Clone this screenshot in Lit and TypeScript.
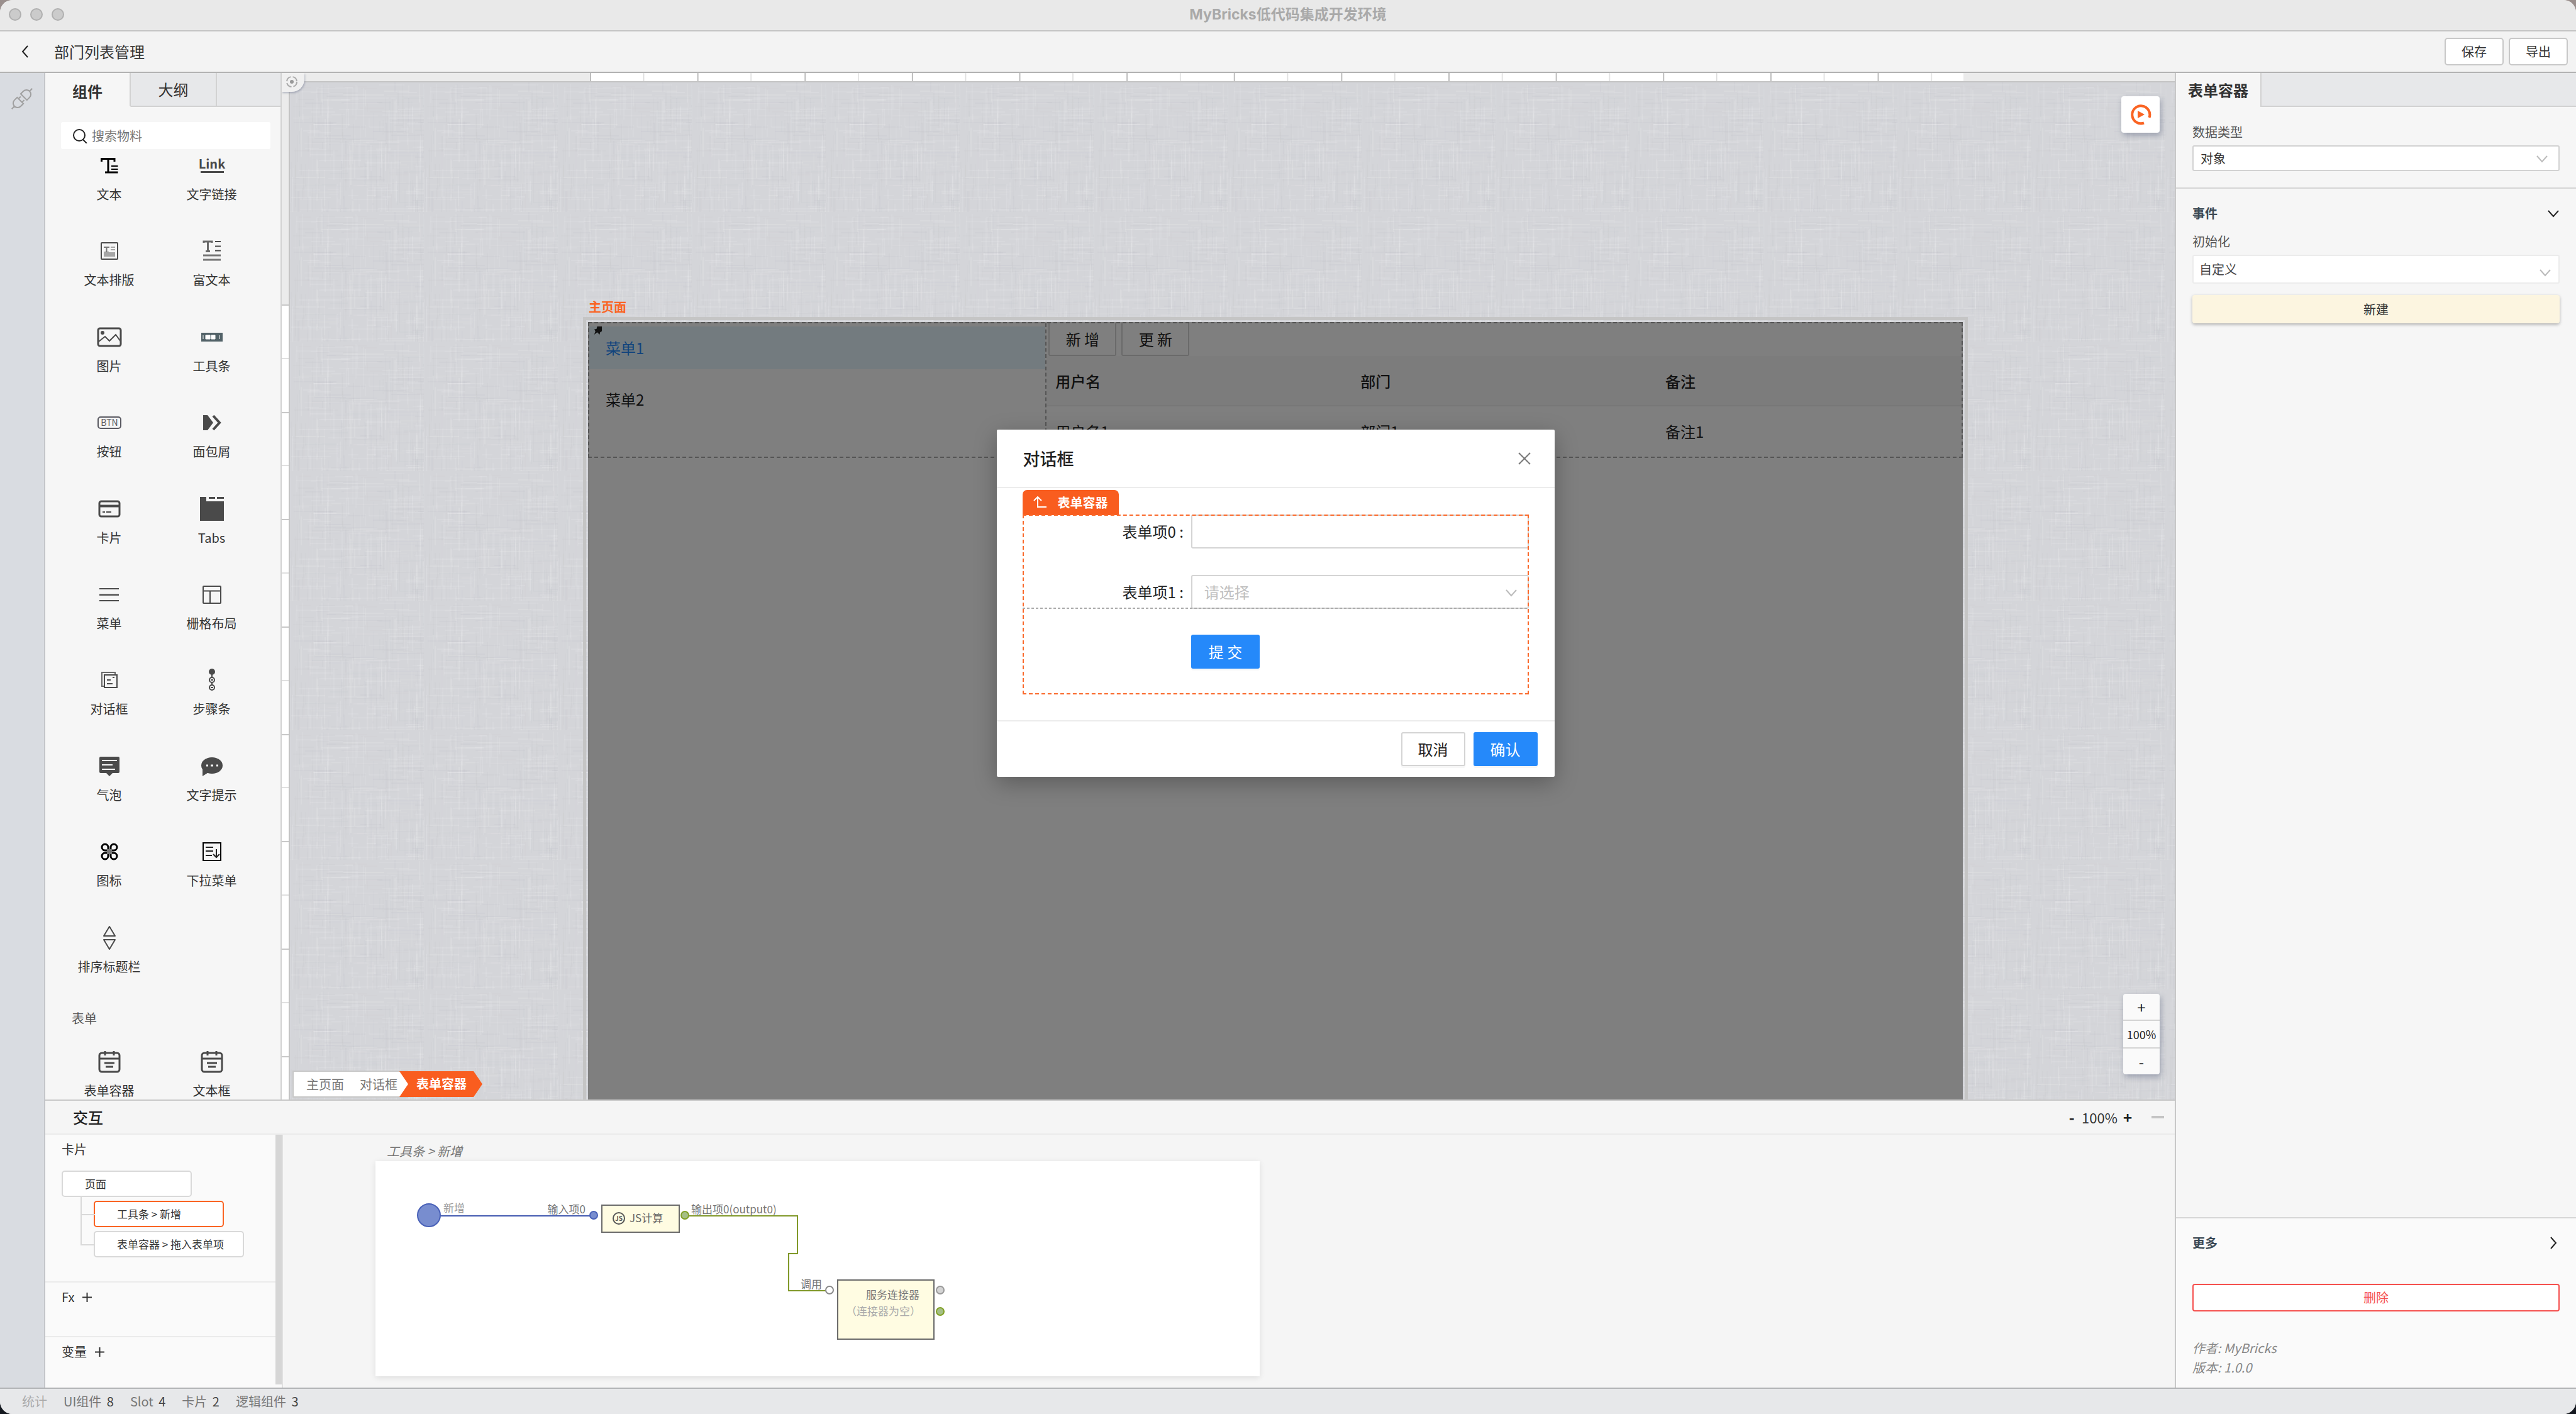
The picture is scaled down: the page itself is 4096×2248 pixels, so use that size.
import { LitElement, html, css, svg, type SVGTemplateResult } from "lit";
import { customElement } from "lit/decorators.js";
import { classMap } from "lit/directives/class-map.js";

const FONT = css`"Noto Sans CJK SC", "Noto Sans", sans-serif`;

/* ---- component glyphs, each drawn in a 48 x 40 box around (24, 20) ---- */
const G = "#4a4a4a";
const formGlyph = svg`
  <rect x="8" y="6" width="32" height="30" rx="4" fill="none" stroke=${G} stroke-width="3"/>
  <path d="M8 15H40M17 3v7M31 3v7M16 22H32M18 28H30" stroke=${G} stroke-width="3" fill="none"/>`;

const glyphs: Record<string, SVGTemplateResult> = {
  text: svg`
    <path d="M11.5 14V9.5H32V14M22 9V31M17 31H37.5" stroke="#000" stroke-width="3" fill="none"/>
    <path d="M27 21H37.5M27 26H37.5" stroke="#000" stroke-width="2" fill="none"/>`,
  link: svg`
    <text x="24" y="25" text-anchor="middle" font-size="20" font-weight="600" fill=${G}>Link</text>
    <rect x="6" y="29" width="37" height="3" fill=${G}/>`,
  layout: svg`
    <rect x="11" y="7" width="26" height="26" rx="1" fill="none" stroke=${G} stroke-width="2"/>
    <path d="M15 14H24M19.5 13V22M16 22H23" stroke="#777" stroke-width="2" fill="none"/>
    <path d="M26 14H33M26 18H33M16 23H32V28H16Z" stroke="#a6a6a6" stroke-width="2" fill="#a6a6a6"/>`,
  rich: svg`
    <path d="M11 7V5H24V7M17.5 5V20M14 20.5H21" stroke="#6a6a6a" stroke-width="3" fill="none"/>
    <path d="M29 5H38M29 12.5H38M29 19.5H38" stroke=${G} stroke-width="2" fill="none"/>
    <path d="M10 27H38M10 34H38" stroke="#777" stroke-width="3" fill="none"/>`,
  image: svg`
    <rect x="6" y="6" width="36" height="28" rx="3" fill="none" stroke=${G} stroke-width="3"/>
    <circle cx="13" cy="13" r="3" fill=${G}/>
    <path d="M7 27L17 19L24 26L34 16L42 27" fill="none" stroke=${G} stroke-width="2"/>`,
  toolbar: svg`
    <rect x="7" y="13" width="34" height="14" fill="#526268"/>
    <path d="M10 17V23M14 17H21V23H14ZM23 17H29V23H23ZM36 17V23" stroke="#fff" stroke-width="1" fill="#fff"/>`,
  btn: svg`
    <rect x="6" y="11" width="36" height="18" rx="4" fill="none" stroke="#5a5a62" stroke-width="2"/>
    <text x="24" y="25" text-anchor="middle" font-size="14" fill="#5a5a62">BTN</text>`,
  crumb: svg`
    <path d="M10 8H17L26 20L17 32H10Z" fill=${G}/>
    <path d="M26 9L36 20L26 31" fill="none" stroke=${G} stroke-width="4"/>`,
  card: svg`
    <rect x="8" y="8" width="32" height="24" rx="3" fill="none" stroke=${G} stroke-width="3"/>
    <path d="M8 15.5H40" stroke=${G} stroke-width="4"/>
    <path d="M13 25H17M19 25H27" stroke=${G} stroke-width="2"/>`,
  tabs: svg`
    <path d="M5 1H15V8H43V39H5Z" fill=${G}/>
    <path d="M19 2.5H29M32 2.5H43" stroke=${G} stroke-width="3"/>`,
  menu: svg`
    <path d="M8 11H39M8 30H39" stroke=${G} stroke-width="2"/>
    <path d="M8 20.5H39" stroke="#666" stroke-width="3"/>`,
  grid: svg`
    <rect x="10" y="7" width="28" height="27" rx="1" fill="none" stroke=${G} stroke-width="2"/>
    <path d="M10 14.5H38M21 15V34" stroke=${G} stroke-width="2"/>`,
  dialog: svg`
    <path d="M16 30H12V8H33V12" fill="none" stroke="#6a6a6a" stroke-width="2"/>
    <path d="M16 12H36V32H16Z" fill="none" stroke=${G} stroke-width="2"/>
    <path d="M20 20H26M29 16H32M20 26H29" stroke=${G} stroke-width="2"/>`,
  steps: svg`
    <circle cx="24" cy="7" r="5" fill=${G}/>
    <circle cx="24" cy="20" r="4" fill="none" stroke=${G} stroke-width="2"/>
    <circle cx="24" cy="32" r="4" fill="none" stroke=${G} stroke-width="2"/>
    <path d="M24 10V16M24 24V28M22 20H26M22 32H26" stroke=${G} stroke-width="2"/>`,
  bubble: svg`
    <path d="M10 5H38A2 2 0 0 1 40 7V29A2 2 0 0 1 38 31H29L24 36L19 31H10A2 2 0 0 1 8 29V7A2 2 0 0 1 10 5Z" fill=${G}/>
    <path d="M12 11H36M12 18H29M12 25H33" stroke="#f6f6f6" stroke-width="2"/>`,
  tip: svg`
    <ellipse cx="24" cy="19" rx="17" ry="13" fill=${G}/>
    <path d="M9 24V36L20 29Z" fill=${G}/>
    <path d="M15 19h3M22 19h4M31 19h3" stroke="#f6f6f6" stroke-width="3"/>`,
  icon: svg`
    <g fill="none" stroke="#000" stroke-width="3">
      <path d="M22 18H17A5 5 0 1 1 22 13ZM26 18H31A5 5 0 1 0 26 13ZM22 22H17A5 5 0 1 0 22 27ZM26 22H31A5 5 0 1 1 26 27Z"/>
    </g><rect x="20" y="16" width="8" height="8" fill="#777"/>`,
  dropdown: svg`
    <rect x="10" y="6" width="28" height="28" fill="none" stroke="#000" stroke-width="2"/>
    <path d="M14 13H26M14 19H26M14 26H24M31 16V28M26 24L31 29L36 24" fill="none" stroke="#222" stroke-width="2"/>`,
  sort: svg`
    <path d="M24 2L33 17H15ZM24 38L33 23H15Z" fill="none" stroke=${G} stroke-width="2" stroke-linejoin="round"/>`,
  form: formGlyph,
};

const basics: [string, string][] = [
  ["text", "文本"], ["link", "文字链接"],
  ["layout", "文本排版"], ["rich", "富文本"],
  ["image", "图片"], ["toolbar", "工具条"],
  ["btn", "按钮"], ["crumb", "面包屑"],
  ["card", "卡片"], ["tabs", "Tabs"],
  ["menu", "菜单"], ["grid", "栅格布局"],
  ["dialog", "对话框"], ["steps", "步骤条"],
  ["bubble", "气泡"], ["tip", "文字提示"],
  ["icon", "图标"], ["dropdown", "下拉菜单"],
  ["sort", "排序标题栏"],
];
const forms: [string, string][] = [["form", "表单容器"], ["form", "文本框"]];

const chevron = (cls: string, dir: "down" | "right" | "left") => {
  const d = { down: "M2 6L10 15L18 6", right: "M6 1L14 10L6 19", left: "M14 1L6 10L14 19" }[dir];
  return html`<svg class=${cls} viewBox="0 0 20 20" aria-hidden="true"><path d=${d} fill="none" stroke="currentColor" stroke-width="2"/></svg>`;
};

/* ---------------- component library ---------------- */
@customElement("component-library")
class ComponentLibrary extends LitElement {
  static styles = css`
    :host { display: flex; flex-direction: column; width: 376px; flex: none; border-right: 2px solid #d2d2d2; background: #f6f6f6; font-family: ${FONT}; color: #333; min-height: 0; overflow: hidden; }
    .tabs { display: flex; height: 54px; flex: none; background: #e7e8ea; }
    .tab { width: 137px; border: 0; border-right: 2px solid #d2d2d2; border-bottom: 2px solid #d2d2d2; background: none; font: 24px/50px ${FONT}; color: #333; padding: 0; }
    .tab.on { background: #f6f6f6; border-bottom-color: #f6f6f6; font-weight: 700; padding-top: 4px; width: 136px; }
    .fill { flex: 1; border-bottom: 2px solid #d2d2d2; }
    .search { display: flex; align-items: center; gap: 7px; margin: 24px 16px 0 25px; height: 43px; padding: 0 18px; background: #fff; border-radius: 3px; flex: none; }
    .search svg { width: 24px; height: 24px; flex: none; }
    .search input { flex: 1; min-width: 0; border: 0; outline: 0; padding: 0; background: none; font: 20px/28px ${FONT}; color: #333; }
    .search input::placeholder { color: #757575; opacity: 1; }
    .grid { display: grid; grid-template-columns: 1fr 1fr; grid-auto-rows: 1fr; padding: 0 28px 0 20px; flex: 1; }
    .grid.last { flex: none; }
    .item { display: flex; flex-direction: column; align-items: center; gap: 12px; padding-top: 6px; font-size: 20px; line-height: 28px; white-space: nowrap; }
    .item svg { width: 48px; height: 40px; font-family: ${FONT}; }
    h3 { margin: 0 0 25px; padding-left: 42px; font-size: 20px; font-weight: 400; line-height: 36px; color: #555; }
  `;
  item = ([icon, label]: [string, string]) => html`
    <div class="item"><svg viewBox="0 0 48 40" aria-hidden="true">${glyphs[icon]}</svg><span>${label}</span></div>`;
  render() {
    return html`
      <div class="tabs"><button class="tab on">组件</button><button class="tab">大纲</button><div class="fill"></div></div>
      <label class="search">
        <svg viewBox="0 0 24 24" aria-hidden="true"><circle cx="11" cy="11" r="9" fill="none" stroke="#222" stroke-width="2"/><path d="M17 18L23 24" stroke="#222" stroke-width="2"/></svg>
        <input type="text" placeholder="搜索物料" aria-label="搜索物料" />
      </label>
      <div class="grid">${basics.map(this.item)}</div>
      <h3>表单</h3>
      <div class="grid last">${forms.map(this.item)}</div>`;
  }
}

/* ---------------- linen backdrop ---------------- */
function weave(): SVGTemplateResult[] {
  let seed = 77;
  const rnd = () => ((seed = (seed * 16807) % 2147483647) / 2147483647);
  const out: SVGTemplateResult[] = [];
  for (let i = 0; i < 420; i++) {
    const vertical = rnd() < 0.55;
    const len = 14 + Math.floor(rnd() * 56);
    const x = Math.floor(rnd() * 213);
    const y = Math.floor(rnd() * 206);
    const tone = rnd() < 0.5 ? "#ffffff" : "#b4b6bc";
    const o = (0.03 + rnd() * 0.08).toFixed(2);
    const w = vertical ? 2 : len;
    const h = vertical ? len : 2;
    out.push(svg`<rect x=${x} y=${y} width=${w} height=${h} fill=${tone} opacity=${o}/>`);
  }
  return out;
}

/* ---------------- dialog shown on the page ---------------- */
@customElement("page-dialog")
class PageDialog extends LitElement {
  static styles = css`
    :host { display: flex; flex-direction: column; width: 887px; background: #fff; border-radius: 2px; box-shadow: 0 10px 36px rgba(0, 0, 0, 0.28); font-family: ${FONT}; color: #222; font-size: 24px; }
    * { box-sizing: border-box; }
    header { display: flex; align-items: center; justify-content: space-between; height: 93px; padding: 0 37px 0 42px; border-bottom: 2px solid #ececec; }
    h2 { margin: 0; font-size: 27px; line-height: 36px; font-weight: 500; }
    .close { width: 22px; height: 22px; padding: 0; border: 0; background: none; color: #777; display: flex; }
    .close svg { width: 22px; height: 22px; }
    .body { padding: 42px 41px 41px; }
    .form { position: relative; display: grid; grid-template-columns: 1fr 2fr; height: 286px; align-content: start; }
    .form::after { content: ""; position: absolute; inset: 0; border: 2px dashed #fa6a2c; pointer-events: none; }
    .tag { position: absolute; left: 0; top: -39px; height: 40px; display: flex; align-items: center; gap: 17px; padding: 0 17px; background: #f95d1f; color: #fff; border-radius: 7px 7px 0 0; font-size: 20px; line-height: 28px; font-weight: 600; }
    .tag svg { width: 22px; height: 20px; }
    .lab { text-align: right; padding-right: 12px; line-height: 54px; }
    .box { height: 54px; width: 100%; border: 2px solid #d4d4d4; border-radius: 3px; background: #fff; font: 24px/36px ${FONT}; padding: 0 19px; outline: 0; }
    .pick { position: relative; display: flex; margin-top: 42px; }
    .pick select { appearance: none; color: #bfbfbf; }
    .pick svg { position: absolute; right: 18px; top: 18px; width: 20px; height: 20px; color: #bbb; }
    .second { margin-top: 42px; }
    .slot { grid-column: 1 / -1; height: 2px; margin-top: -2px; background: repeating-linear-gradient(90deg, #aaa 0 4px, transparent 4px 7px); z-index: 1; }
    button.b { height: 54px; border: 2px solid #d4d4d4; border-radius: 3px; background: #fff; color: #222; font: 24px/36px ${FONT}; padding: 0 25px; box-shadow: 0 3px 0 rgba(0, 0, 0, 0.03); }
    button.primary { background: #2589fa; border-color: #2589fa; color: #fff; }
    button.submit { grid-column: 2; justify-self: start; margin-top: 41px; padding: 0 26px; }
    footer { display: flex; justify-content: flex-end; gap: 13px; padding: 17px 27px; border-top: 2px solid #ececec; }
  `;
  render() {
    return html`
      <header><h2>对话框</h2>
        <button class="close" aria-label="关闭"><svg viewBox="0 0 22 22"><path d="M2 2L20 20M20 2L2 20" stroke="currentColor" stroke-width="2"/></svg></button>
      </header>
      <div class="body"><div class="form">
        <div class="tag"><svg viewBox="0 0 22 20"><path d="M1 7L7 1L13 7M7 2V17H21" fill="none" stroke="#fff" stroke-width="2"/></svg>表单容器</div>
        <label class="lab" for="f0">表单项0 :</label>
        <input class="box" id="f0" type="text" />
        <label class="lab second" for="f1">表单项1 :</label>
        <div class="pick"><select class="box" id="f1"><option>请选择</option></select>${chevron("arrow", "down")}</div>
        <div class="slot"></div>
        <button class="b primary submit">提 交</button>
      </div></div>
      <footer><button class="b">取消</button><button class="b primary">确认</button></footer>`;
  }
}

/* ---------------- design canvas ---------------- */
@customElement("design-canvas")
class DesignCanvas extends LitElement {
  static styles = css`
    :host { position: relative; display: grid; grid-template: 15px 1fr / 13px 1fr; flex: 1; min-width: 0; min-height: 0; overflow: hidden; font-family: ${FONT}; color: #222; background: #d4d5d9; }
    * { box-sizing: border-box; }
    .ruler { background: #ebebeb; }
    .top { grid-column: 1 / -1; padding: 0 336px 0 490px; border-bottom: 2px solid #c4c4c4; }
    .top div { height: 100%; background-color: #fff; background-image: linear-gradient(90deg, #bdbdbd 0 2px, transparent 2px 50%, #d8d8d8 50%, transparent 51%); background-size: 7.8125% 100%; }
    .left { padding-top: 353px; border-right: 2px solid #c4c4c4; }
    .left svg { display: block; width: 100%; height: 100%; background: #fff; }
    .corner { position: absolute; left: 0; top: 0; width: 36px; height: 30px; background: #f0f0f0; border-radius: 0 0 20px 0; box-shadow: 1px 2px 3px rgba(80, 90, 120, 0.35); }
    .corner svg { position: absolute; left: 5px; top: 3px; width: 22px; height: 22px; }
    .field { position: relative; display: flex; flex-direction: column; min-height: 0; overflow: hidden; padding: 343px 329px 0 466px; }
    .linen { position: absolute; inset: 0; width: 100%; height: 100%; }
    .name { position: relative; font-size: 20px; line-height: 28px; margin: 0 0 2px 9px; color: #fa6423; font-weight: 600; }
    .frame { position: relative; flex: 1; min-height: 0; border: 5px solid #c5c5c5; border-bottom: 0; padding: 3px 3px 0; }
    .page { position: relative; height: 100%; background: #fff; font-size: 24px; }
    .cols { display: grid; grid-template-columns: 1fr 2fr; height: 216px; border: 2px dashed #aaa; }
    .nav { padding-top: 5px; display: flex; flex-direction: column; gap: 14px; border-right: 2px dashed #aaa; position: relative; }
    .nav a { color: #222; text-decoration: none; line-height: 68px; padding-left: 26px; }
    .nav a.on { background: #e6f7ff; color: #2589fa; }
    .pin { position: absolute; left: 6px; top: 4px; width: 15px; height: 15px; }
    .tools { display: flex; gap: 8px; padding-left: 3px; height: 52px; background: #fff; }
    .tools button { width: 108px; border: 2px solid #d4d4d4; border-top: 0; border-radius: 0 0 3px 3px; background: #fff; color: #222; font: 24px/36px ${FONT}; padding: 0; }
    table { width: 100%; border-collapse: collapse; table-layout: fixed; }
    th, td { text-align: left; padding: 0 14px; height: 79px; font-weight: 400; }
    th { background: #f8f8f8; font-weight: 500; border-bottom: 2px solid #eee; }
    .mask { position: absolute; inset: 0; background: rgba(0, 0, 0, 0.5); display: flex; justify-content: center; align-items: flex-start; padding-top: 171px; }
    .float { position: absolute; right: 24px; background: #fff; border-radius: 4px; box-shadow: 2px 4px 10px rgba(80, 90, 120, 0.45); border: 0; padding: 0; overflow: hidden; }
    .play { top: 37px; width: 61px; height: 58px; }
    .play svg { width: 34px; height: 34px; display: block; margin: auto; }
    .zoom { bottom: 40px; width: 58px; background: #fafafa; }
    .zoom button, .zoom span { display: block; width: 100%; height: 41px; border: 0; background: none; padding: 0; text-align: center; font: 24px/38px ${FONT}; color: #222; }
    .zoom span { height: 46px; font-size: 18px; line-height: 42px; border: solid #d4d4d4; border-width: 2px 0; }
    .crumbs { position: absolute; left: 17px; bottom: 3px; display: flex; height: 43px; font-size: 20px; line-height: 39px; }
    .crumbs div { display: flex; gap: 25px; padding: 0 17px 0 20px; background: #fff; border: 2px solid #c8c8c8; border-right: 0; }
    .crumbs a { color: #777; text-decoration: none; }
    .crumbs a.on { margin: 1px 0 1px -14px; padding: 0 25px 0 27px; background: #f95d1f; color: #fff; font-weight: 600; clip-path: polygon(0 0, calc(100% - 14px) 0, 100% 50%, calc(100% - 14px) 100%, 0 100%, 14px 50%); }
  `;
  render() {
    return html`
      <div class="ruler top"><div></div></div>
      <div class="ruler left">
        <svg aria-hidden="true"><defs><pattern id="tick" width="14" height="512" patternUnits="userSpaceOnUse">
          <path d="M0 1H14M0 172H14M0 342H14" stroke="#c8c8c8" stroke-width="2"/><path d="M0 86H14M0 256H14M0 427H14" stroke="#e0e0e0" stroke-width="2"/>
        </pattern></defs><rect width="100%" height="100%" fill="url(#tick)"/></svg>
      </div>
      <div class="field">
        <svg class="linen" aria-hidden="true"><defs><pattern id="w" width="213" height="206" patternUnits="userSpaceOnUse">${weave()}</pattern></defs>
          <rect width="100%" height="100%" fill="url(#w)"/></svg>
        <div class="name">主页面</div>
        <div class="frame"><div class="page">
          <div class="cols">
            <nav class="nav"><a class="on" href="#m1">菜单1</a><a href="#m2">菜单2</a>
              <svg class="pin" viewBox="0 0 16 16" aria-hidden="true"><path d="M7 1H15V9L12 11L11 15L7 11L2 15L4 9L2 6L6 5Z" fill="#222"/></svg>
            </nav>
            <div>
              <div class="tools"><button>新 增</button><button>更 新</button></div>
              <table>
                <thead><tr><th>用户名</th><th>部门</th><th>备注</th></tr></thead>
                <tbody><tr><td>用户名1</td><td>部门1</td><td>备注1</td></tr></tbody>
              </table>
            </div>
          </div>
          <div class="mask"><page-dialog></page-dialog></div>
        </div></div>
      </div>
      <div class="corner"><svg viewBox="0 0 22 22" aria-hidden="true"><circle cx="11" cy="11" r="8" fill="none" stroke="#aaa" stroke-width="2" stroke-dasharray="10 3"/><circle cx="11" cy="11" r="3" fill="#999"/></svg></div>
      <button class="float play" aria-label="预览"><svg viewBox="0 0 34 34"><path d="M22 30.500A14 14 0 1 1 30.500 22" fill="none" stroke="#fa6423" stroke-width="4"/><path d="M12 11L23 17L12 23Z" fill="#fa6423"/></svg></button>
      <div class="float zoom"><button>+</button><span>100%</span><button>-</button></div>
      <nav class="crumbs"><div><a href="#p">主页面</a><a href="#d">对话框</a></div><a class="on" href="#f">表单容器</a></nav>`;
  }
}

/* ---------------- interaction panel ---------------- */
@customElement("flow-panel")
class FlowPanel extends LitElement {
  static styles = css`
    :host { display: flex; flex-direction: column; height: 458px; box-sizing: border-box; flex: none; border-top: 2px solid #c8c8c8; background: #f5f5f5; font-family: ${FONT}; color: #333; font-size: 20px; }
    * { box-sizing: border-box; }
    header { display: flex; align-items: center; justify-content: space-between; height: 54px; flex: none; padding: 0 17px 0 44px; border-bottom: 2px solid #ebebeb; }
    h2 { margin: 0; font-size: 24px; line-height: 36px; font-weight: 500; color: #222; }
    .zoom { display: flex; align-items: center; gap: 8px; font-size: 22px; line-height: 32px; }
    .zoom button { border: 0; background: none; padding: 0; width: 16px; font: 700 24px/32px ${FONT}; color: #222; }
    .zoom .min { margin-left: 22px; width: 20px; height: 4px; background: #c4c4c4; }
    .main { flex: 1; display: flex; min-height: 0; }
    aside { width: 378px; flex: none; border-right: 2px solid #e0e0e0; display: flex; background: #fafafa; }
    .groups { flex: 1; display: flex; flex-direction: column; min-width: 0; }
    .bar { width: 10px; margin-bottom: 5px; background: #d6d6d6; }
    .group { flex: none; border-bottom: 2px solid #ebebeb; padding: 9px 0 0 26px; line-height: 28px; height: 87px; }
    .group.cards { height: 235px; }
    .group:last-child { border: 0; height: auto; }
    .add { border: 0; background: none; padding: 0; margin-left: 12px; width: 17px; height: 17px; vertical-align: -1px; }
    .add svg { display: block; width: 17px; height: 17px; }
    h3 { margin: 0; font: inherit; }
    ul { list-style: none; margin: 0; padding: 0; }
    .tree { margin-top: 20px; display: flex; flex-direction: column; align-items: flex-start; }
    .node { display: block; min-width: 207px; height: 42px; border: 2px solid #d9d9d9; border-radius: 5px; background: #fff; font: 17px/26px ${FONT}; color: #333; padding: 0 30px 0 35px; text-align: left; white-space: nowrap; }
    .node.on { border-color: #fa6423; }
    .kids { margin-left: 30px; }
    .kids li { padding: 6px 0 0 21px; position: relative; }
    .kids li::before { content: ""; position: absolute; left: 0; top: 0; width: 21px; height: 27px; border-left: 2px solid #d9d9d9; border-bottom: 2px solid #d9d9d9; }
    .kids li + li::before { top: -22px; height: 49px; }
    .stage { flex: 1; padding: 12px 0 0 147px; min-width: 0; }
    .cap { padding-left: 18px; font-style: italic; line-height: 28px; color: #757575; margin-bottom: 2px; }
    .sheet { display: block; width: 1406px; height: 342px; background: #fff; box-shadow: 0 2px 9px rgba(0, 0, 0, 0.1); font-family: ${FONT}; font-size: 17px; }
  `;
  plus = html`<svg viewBox="0 0 17 17" aria-hidden="true"><path d="M8.5 1V16M1 8.5H16" stroke="#333" stroke-width="2"/></svg>`;
  render() {
    const cards = [{ t: "工具条 > 新增", on: true }, { t: "表单容器 > 拖入表单项", on: false }];
    return html`
      <header><h2>交互</h2><div class="zoom"><button>-</button><span>100%</span><button>+</button><span class="min"></span></div></header>
      <div class="main">
        <aside>
          <div class="groups">
            <section class="group cards"><h3>卡片</h3>
              <div class="tree"><button class="node">页面</button>
                <ul class="kids">${cards.map((c) => html`<li><button class=${classMap({ node: true, on: c.on })}>${c.t}</button></li>`)}</ul>
              </div>
            </section>
            <section class="group">Fx<button class="add" aria-label="添加 Fx">${this.plus}</button></section>
            <section class="group">变量<button class="add" aria-label="添加变量">${this.plus}</button></section>
          </div>
          <div class="bar"></div>
        </aside>
        <div class="stage">
          <div class="cap">工具条 &gt; 新增</div>
          <svg class="sheet" viewBox="0 0 1406 342">
            <path d="M103 87H345" stroke="#435ab0" stroke-width="2"/>
            <circle cx="85" cy="86" r="18" fill="#788dcf" stroke="#4961b8" stroke-width="2"/>
            <circle cx="347" cy="86" r="6" fill="#788dcf" stroke="#4961b8" stroke-width="2"/>
            <path d="M499 87H671V147H657V206H716" fill="none" stroke="#81992a" stroke-width="2"/>
            <rect x="360" y="70" width="123" height="43" fill="#fffce2" stroke="#6b6b6b" stroke-width="2"/>
            <circle cx="387" cy="91" r="9" fill="none" stroke="#555" stroke-width="2"/>
            <text x="387" y="95" font-size="10" font-weight="700" text-anchor="middle" fill="#555">JS</text>
            <text x="404" y="97" fill="#666">JS计算</text>
            <circle cx="492" cy="86" r="6" fill="#a5bf86" stroke="#81a026" stroke-width="2"/>
            <text x="108" y="81" fill="#999">新增</text>
            <text x="334" y="83" fill="#777" text-anchor="end">输入项0</text>
            <text x="502" y="83" fill="#777">输出项0(output0)</text>
            <text x="676" y="202" fill="#777">调用</text>
            <rect x="735" y="189" width="153" height="94" fill="#fffce2" stroke="#6b6b6b" stroke-width="2"/>
            <text x="780" y="219" fill="#777">服务连接器</text>
            <text x="748" y="245" fill="#aaa">（连接器为空）</text>
            <circle cx="722" cy="205" r="6" fill="#fff" stroke="#8a8a8a" stroke-width="2"/>
            <circle cx="898" cy="205" r="6" fill="#d4d4d4" stroke="#999" stroke-width="2"/>
            <circle cx="898" cy="239" r="6" fill="#a5bf86" stroke="#81a026" stroke-width="2"/>
          </svg>
        </div>
      </div>`;
  }
}

/* ---------------- property panel ---------------- */
@customElement("property-panel")
class PropertyPanel extends LitElement {
  static styles = css`
    :host { display: flex; flex-direction: column; width: 638px; box-sizing: border-box; flex: none; border-left: 2px solid #c8c8c8; background: #f6f6f6; font-family: ${FONT}; font-size: 20px; line-height: 28px; color: #555; }
    * { box-sizing: border-box; }
    .tabs { display: flex; height: 54px; background: #e7e8ea; }
    .tab { border: 0; border-right: 2px solid #d2d2d2; background: #f6f6f6; padding: 0 19px; font: 600 24px/36px ${FONT}; color: #333; }
    .fill { flex: 1; border-bottom: 2px solid #d2d2d2; }
    .sec { display: flex; flex-direction: column; padding: 0 26px; }
    .first { padding-top: 26px; padding-bottom: 26px; border-bottom: 2px solid #d6d6d6; }
    .events { flex: 1; padding-top: 25px; }
    .head { display: flex; align-items: center; justify-content: space-between; font-weight: 600; color: #3d4a55; }
    .chev { width: 20px; height: 20px; color: #222; }
    .pick { position: relative; display: flex; margin-top: 7px; }
    select { appearance: none; width: 100%; height: 41px; border: 2px solid #d2d2d2; border-radius: 3px; background: #fff; padding: 0 11px; font: 20px/28px ${FONT}; color: #333; outline: 0; }
    .soft select { height: 46px; border-color: #ececec; color: #444; padding: 0 9px; }
    .arrow { position: absolute; right: 18px; top: 11px; width: 20px; height: 20px; color: #bbb; }
    .soft .arrow { right: 13px; top: 18px; }
    .init { margin-top: 17px; }
    .new { height: 45px; margin-top: 18px; border: 0; border-radius: 4px; background: #fcf5e0; box-shadow: 0 2px 5px rgba(0, 0, 0, 0.3); font: 20px/28px ${FONT}; color: #333; }
    .more { border-top: 2px solid #d6d6d6; background: #fafafa; padding-top: 25px; height: 271px; }
    .del { height: 44px; margin-top: 51px; border: 2px solid #f5504e; border-radius: 4px; background: #fff; font: 20px/28px ${FONT}; color: #f5504e; }
    .meta { margin-top: 42px; font-style: italic; line-height: 31px; color: #888; }
  `;
  render() {
    return html`
      <div class="tabs"><button class="tab">表单容器</button><div class="fill"></div></div>
      <div class="sec first"><label for="t">数据类型</label>
        <div class="pick"><select id="t"><option>对象</option></select>${chevron("arrow", "down")}</div></div>
      <div class="sec events"><div class="head">事件${chevron("chev", "down")}</div>
        <label class="init" for="i">初始化</label>
        <div class="pick soft"><select id="i"><option>自定义</option></select>${chevron("arrow", "down")}</div>
        <button class="new">新建</button></div>
      <div class="sec more"><div class="head">更多${chevron("chev", "right")}</div>
        <button class="del">删除</button>
        <div class="meta">作者: MyBricks<br />版本: 1.0.0</div></div>`;
  }
}

/* ---------------- shell ---------------- */
@customElement("app-root")
class AppRoot extends LitElement {
  static styles = css`
    :host { display: block; height: 100vh; background: linear-gradient(#9a8f8d, #14181f); font-family: ${FONT}; color: #333; }
    * { box-sizing: border-box; }
    .win { height: 100%; display: flex; flex-direction: column; border-radius: 20px; overflow: hidden; background: #f3f3f3; }
    .title { position: relative; height: 50px; flex: none; display: flex; align-items: center; justify-content: center; padding-bottom: 2px; background: #e9e9e9; border-bottom: 2px solid #c4c4c4; font: 700 23px/32px "Inter", ${FONT}; color: #a9a9a9; }
    .lights { position: absolute; left: 14px; display: flex; gap: 14px; }
    .lights i { width: 20px; height: 20px; border-radius: 50%; background: #cbcbcb; border: 2px solid #b0b0b0; }
    .head { display: flex; align-items: center; gap: 36px; height: 66px; flex: none; padding: 0 13px 0 30px; border-bottom: 2px solid #b2b2b2; }
    .back { border: 0; background: none; padding: 0; color: #222; display: flex; }
    .bk { width: 20px; height: 20px; }
    h1 { margin: 0; font-size: 24px; line-height: 36px; font-weight: 400; flex: 1; }
    .acts { display: flex; gap: 8px; }
    .acts button { width: 94px; height: 44px; border: 2px solid #c8c8c8; border-radius: 5px; background: #fff; font: 20px/28px ${FONT}; color: #333; padding: 0; }
    .body { flex: 1; display: flex; min-height: 0; }
    .rail { width: 72px; flex: none; background: #d9dce1; border-right: 2px solid #c4c6ca; display: flex; justify-content: center; padding-top: 22px; }
    .rail svg { width: 38px; height: 38px; }
    .center { flex: 1; min-width: 0; display: flex; flex-direction: column; }
    .work { flex: 1; min-height: 0; display: flex; }
    .status { display: flex; gap: 26px; height: 42px; flex: none; align-items: center; padding: 0 35px; background: #e7e8ea; border-top: 2px solid #b2b4b6; font-size: 20px; line-height: 28px; color: #777; }
    .status b { margin-left: 4px; font-weight: 400; color: #444; }
    .dim { color: #aaa; }
  `;
  render() {
    const stats: [string, number][] = [["UI组件", 8], ["Slot", 4], ["卡片", 2], ["逻辑组件", 3]];
    return html`<div class="win">
      <div class="title"><div class="lights"><i></i><i></i><i></i></div>MyBricks低代码集成开发环境</div>
      <header class="head"><button class="back" aria-label="返回">${chevron("bk", "left")}</button><h1>部门列表管理</h1>
        <div class="acts"><button>保存</button><button>导出</button></div></header>
      <div class="body">
        <div class="rail"><svg viewBox="0 0 38 38" aria-hidden="true"><g transform="rotate(-45 19 19)" fill="none" stroke="#a0a0a0" stroke-width="2">
          <path d="M-4 19H2M36 19H42M15 12H9A7 7 0 0 0 9 26H15ZM15 15H20M15 23H20M23 12H29A7 7 0 0 1 29 26H23Z"/></g></svg></div>
        <div class="center">
          <div class="work"><component-library></component-library><design-canvas></design-canvas></div>
          <flow-panel></flow-panel>
        </div>
        <property-panel></property-panel>
      </div>
      <footer class="status"><span class="dim">统计</span>${stats.map(([k, v]) => html`<span>${k} <b>${v}</b></span>`)}</footer>
    </div>`;
  }
}
